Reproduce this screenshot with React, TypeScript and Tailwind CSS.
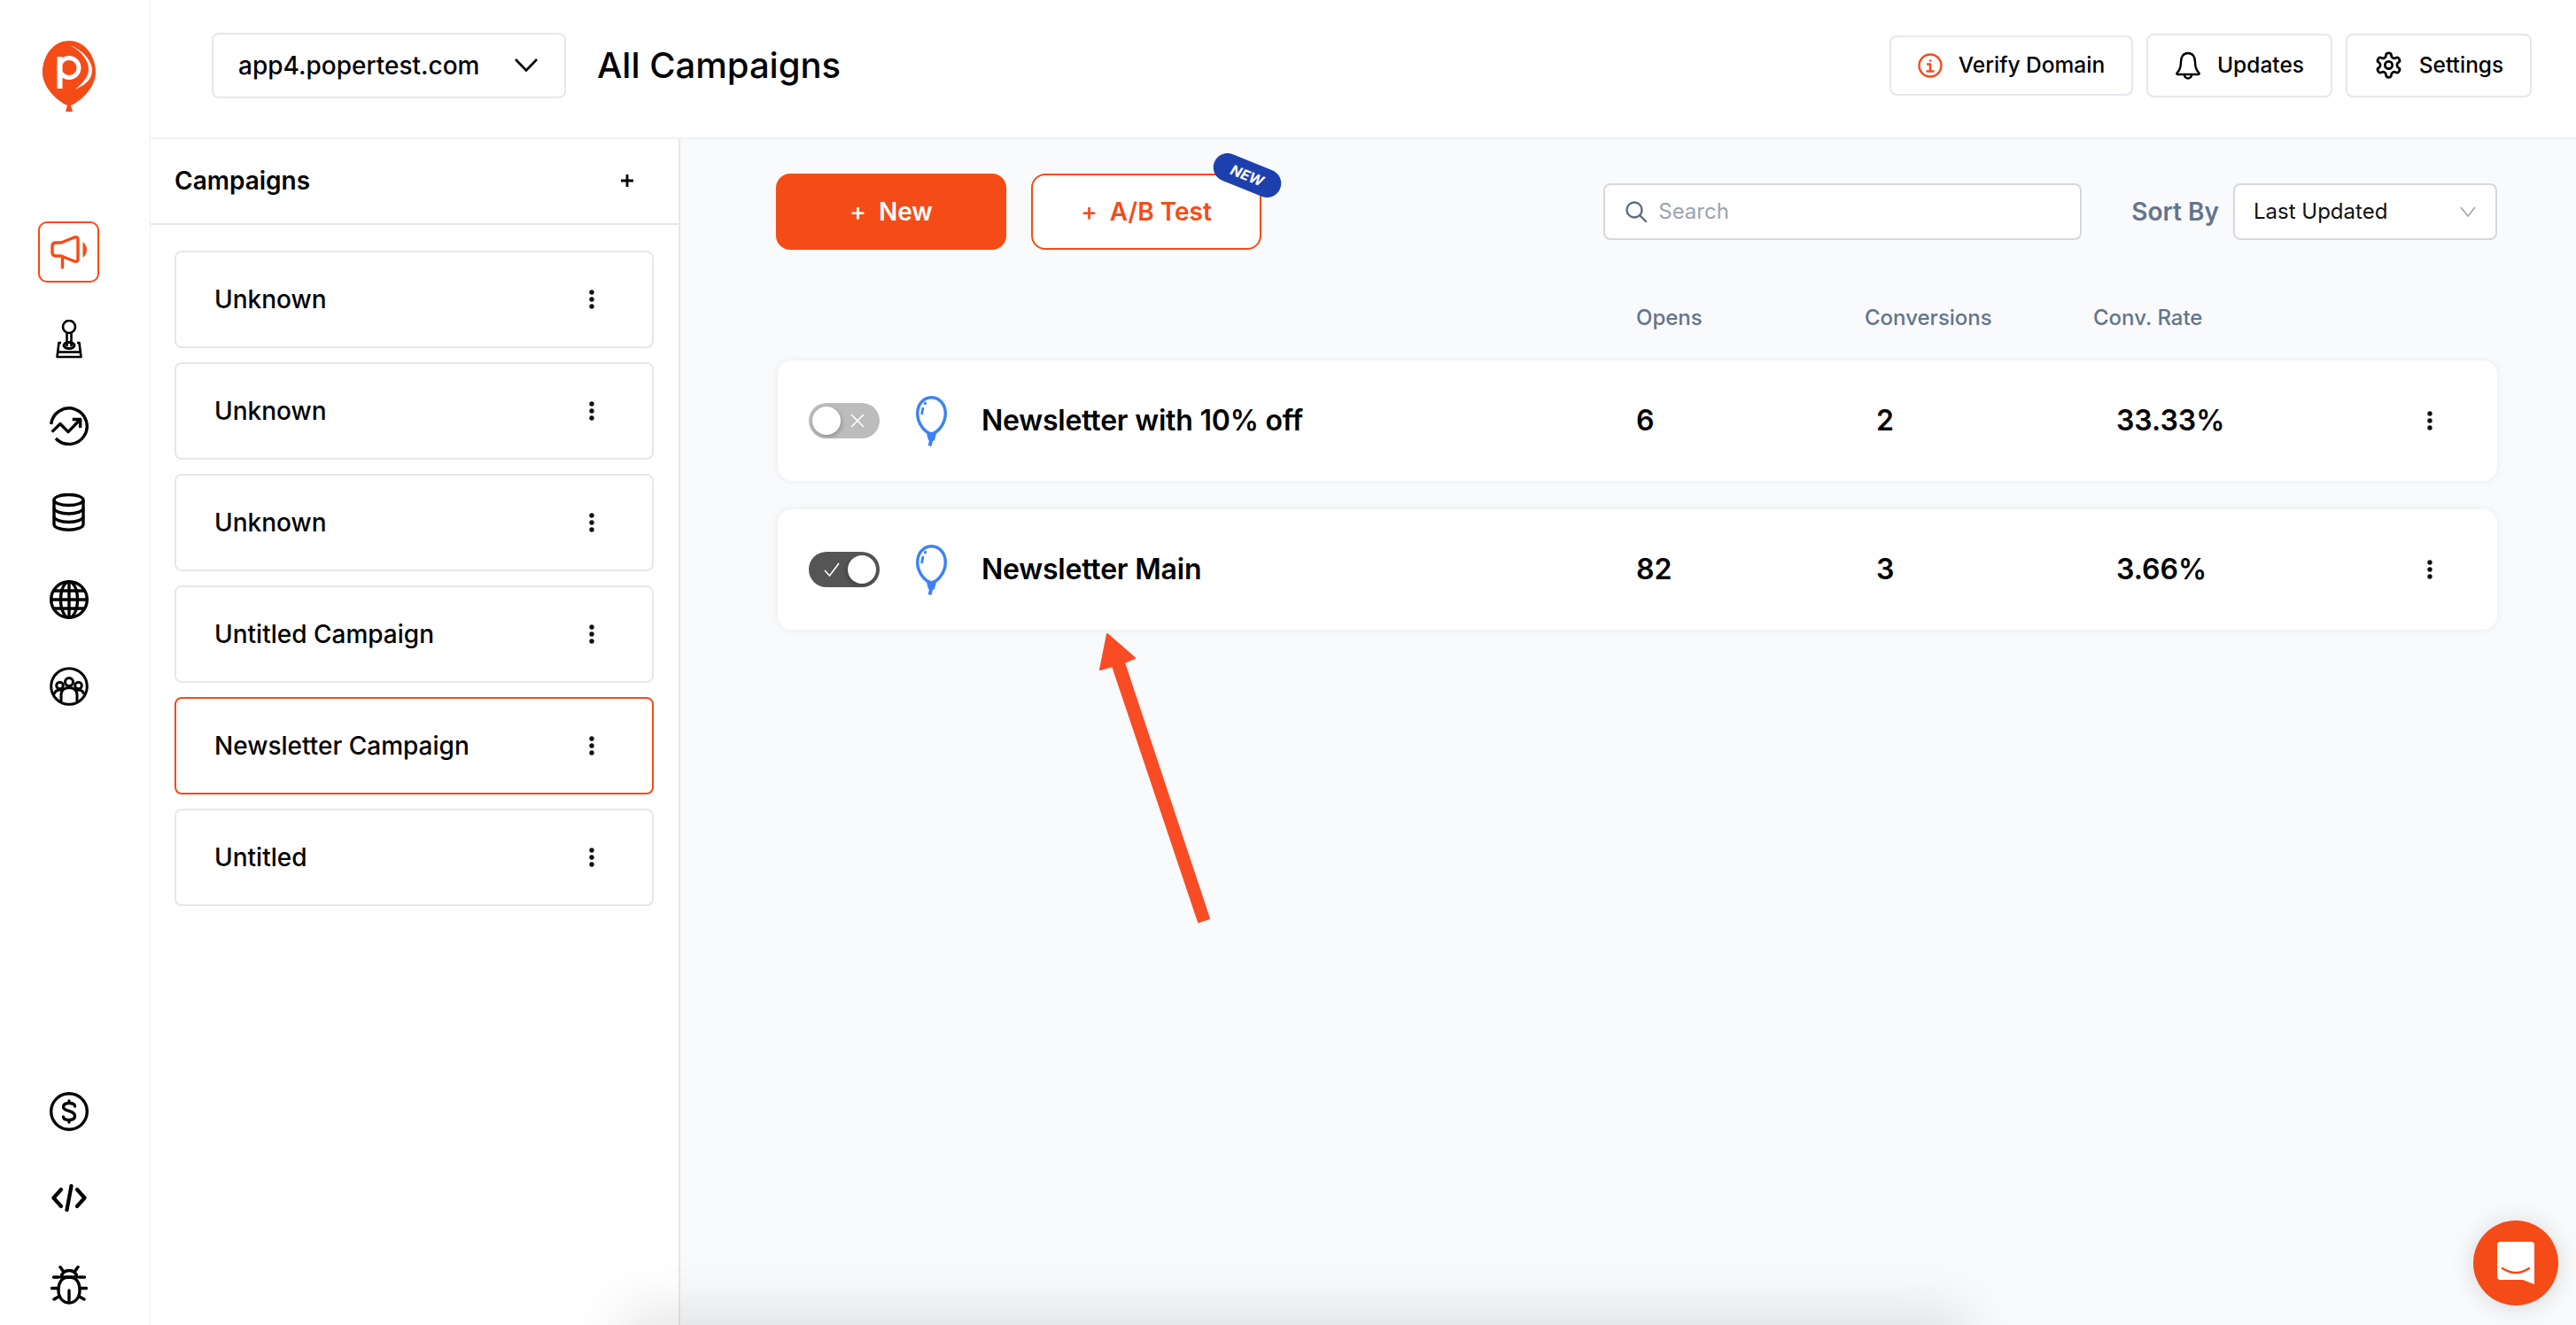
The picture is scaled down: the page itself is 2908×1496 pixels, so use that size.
import React from "react";

const ORANGE = "#f54b17";

function Logo() {
  return (
    <svg width="60" height="80" viewBox="0 0 60 80">
      <path d="M30 0C47 0 60 16 60 36C60 52 44 68 32 73L34 80L26 80L28 73C16 68 0 52 0 36C0 16 13 0 30 0Z" fill={ORANGE} />
      <circle cx="30" cy="30.5" r="11" fill="none" stroke="#fff" strokeWidth="5" />
      <rect x="16.500" y="18" width="6" height="36" fill="#fff" />
      <path d="M31 5C47 11 56 24 56 33C56 44 48 50 37 55C46 47 52 41 52 32C52 22 44 12 31 5Z" fill="#fff" />
    </svg>
  );
}

function Megaphone() {
  return (
    <svg width="41" height="39" viewBox="0 0 41 39" fill="none" stroke={ORANGE} strokeWidth="3.400" strokeLinejoin="round" strokeLinecap="round">
      <path d="M12 9L27 3Q31 2 31 5V28Q31 31 27 30L12 24H6Q2 24 2 20V13Q2 9 6 9Z" />
      <path d="M13.500 25V37" />
      <path d="M36.500 8Q41 12 41 17Q41 22 36.500 26Z" fill={ORANGE} stroke="none" />
    </svg>
  );
}

function Joystick() {
  return (
    <svg width="30" height="44" viewBox="0 0 30 44" fill="none" stroke="#000" strokeWidth="2.600" strokeLinejoin="round">
      <circle cx="15" cy="8" r="7" />
      <path d="M12.500 15V30M17.500 15V30" />
      <ellipse cx="15" cy="29" rx="6" ry="3.500" strokeWidth="3" />
      <path d="M6 26H3.500L1.500 42H28.500L26.500 26H24" />
      <path d="M2 36.500H28" />
    </svg>
  );
}

function Trend() {
  return (
    <svg width="44" height="44" viewBox="0 0 44 44" fill="none" stroke="#000" strokeWidth="3.400" strokeLinejoin="round">
      <path d="M1.700 20A20.300 20.300 0 1 1 7 36" />
      <path d="M2.700 28.600L12 19.500L21 28.600L34.700 14.500" />
      <path d="M25.700 14.500H34.700V24" />
    </svg>
  );
}

function Db() {
  return (
    <svg width="37" height="43" viewBox="0 0 37 43" fill="none" stroke="#000" strokeWidth="3.400">
      <ellipse cx="18.500" cy="7.500" rx="16.500" ry="6" />
      <path d="M2 7.500V35C2 38.500 9.500 41.300 18.500 41.300C27.500 41.300 35 38.500 35 35V7.500" />
      <path d="M2 16.500C2 20 9.500 23 18.500 23C27.500 23 35 20 35 16.500" />
      <path d="M2 26C2 29.500 9.500 32.500 18.500 32.500C27.500 32.500 35 29.500 35 26" />
    </svg>
  );
}

function Globe() {
  return (
    <svg width="44" height="44" viewBox="0 0 44 44" fill="none" stroke="#000" strokeWidth="3.400">
      <circle cx="22" cy="22" r="20.300" />
      <ellipse cx="22" cy="22" rx="9.500" ry="20.300" />
      <path d="M22 1.500V42.500M1.500 22H42.500M4.500 12H39.500M4.500 32H39.500" />
    </svg>
  );
}

function Audience() {
  return (
    <svg width="44" height="44" viewBox="0 0 44 44" fill="none" stroke="#000" strokeWidth="3">
      <circle cx="22" cy="22" r="20.300" />
      <circle cx="22" cy="17" r="4.500" />
      <circle cx="11.500" cy="21" r="3.800" />
      <circle cx="32.500" cy="21" r="3.800" />
      <path d="M13 41V32C13 26 17 23.500 22 23.500C27 23.500 31 26 31 32V41" />
      <path d="M5 31C6 27 8.500 25.500 13 26M39 31C38 27 35.500 25.500 31 26" />
    </svg>
  );
}

function Dollar() {
  return (
    <svg width="44" height="44" viewBox="0 0 44 44" fill="none" stroke="#000" strokeWidth="3.400" strokeLinecap="round">
      <circle cx="22" cy="22" r="20.300" />
      <path d="M28.500 16C28.500 13.500 26 12.500 22 12.500C18 12.500 15.500 14 15.500 17C15.500 22 28.500 20.500 28.500 27C28.500 30 26 31.500 22 31.500C18 31.500 15.500 30.500 15.500 28" />
      <path d="M22 10V12M22 32V34" />
    </svg>
  );
}

function Code() {
  return (
    <svg width="40" height="32" viewBox="0 0 40 32" fill="none" stroke="#000" strokeWidth="4.200" strokeLinecap="round" strokeLinejoin="round">
      <path d="M11 6L2.500 15.500L11 25" />
      <path d="M29 6L37.500 15.500L29 25" />
      <path d="M22.500 2L17.500 29" />
    </svg>
  );
}

function Bug() {
  return (
    <svg width="42" height="44" viewBox="0 0 42 44" fill="none" stroke="#000" strokeWidth="3.400" strokeLinecap="round" strokeLinejoin="round">
      <path d="M21 13C12 13 9 20 9 28C9 36 14 42 21 42C28 42 33 36 33 28C33 20 30 13 21 13Z" />
      <path d="M12 13H30C29 8 26 5.500 21 5.500C16 5.500 13 8 12 13Z" />
      <path d="M21 28V41" />
      <path d="M11 1.500L14.500 6.500M31 1.500L27.500 6.500M3.500 13H9.500M38.500 13H32.500M1.500 25.500H8M40.500 25.500H34M4 38L10 34.500M38 38L32 34.500" />
    </svg>
  );
}

function InfoIcon() {
  return (
    <svg width="28" height="28" viewBox="0 0 28 28" fill="none" stroke={ORANGE} strokeWidth="2.400" strokeLinecap="round">
      <circle cx="14" cy="14" r="12.500" />
      <circle cx="14" cy="8.500" r="1.300" fill={ORANGE} stroke="none" />
      <path d="M11 12.500H14V20M10.500 20.500H17.500" />
    </svg>
  );
}

function Bell() {
  return (
    <svg width="30" height="32" viewBox="0 0 30 32" fill="none" stroke="#000" strokeWidth="2.400" strokeLinejoin="round" strokeLinecap="round">
      <path d="M15 2C9 2 7 7 7 12C7 19 5 22 2.500 24.500C2 25.500 2.500 26 3.500 26H26.500C27.500 26 28 25.500 27.500 24.500C25 22 23 19 23 12C23 7 21 2 15 2Z" />
      <path d="M11 26.500C11 29 13 30.500 15 30.500C17 30.500 19 29 19 26.500" />
    </svg>
  );
}

function Gear() {
  return (
    <svg width="33" height="33" viewBox="0 0 24 24" fill="none" stroke="#000" strokeWidth="2" strokeLinecap="round" strokeLinejoin="round">
      <path d="M12.220 2h-.44a2 2 0 0 0-2 2v.18a2 2 0 0 1-1 1.730l-.43.250a2 2 0 0 1-2 0l-.150-.080a2 2 0 0 0-2.730.730l-.220.380a2 2 0 0 0 .730 2.730l.150.100a2 2 0 0 1 1 1.720v.510a2 2 0 0 1-1 1.740l-.150.090a2 2 0 0 0-.730 2.730l.220.380a2 2 0 0 0 2.730.730l.150-.080a2 2 0 0 1 2 0l.430.250a2 2 0 0 1 1 1.730V20a2 2 0 0 0 2 2h.440a2 2 0 0 0 2-2v-.18a2 2 0 0 1 1-1.730l.430-.250a2 2 0 0 1 2 0l.150.080a2 2 0 0 0 2.730-.730l.220-.390a2 2 0 0 0-.730-2.730l-.150-.080a2 2 0 0 1-1-1.740v-.500a2 2 0 0 1 1-1.740l.150-.090a2 2 0 0 0 .730-2.730l-.220-.380a2 2 0 0 0-2.730-.730l-.150.080a2 2 0 0 1-2 0l-.430-.250a2 2 0 0 1-1-1.730V4a2 2 0 0 0-2-2z" />
      <circle cx="12" cy="12" r="3" />
    </svg>
  );
}

function Dots() {
  return (
    <svg width="6" height="22" viewBox="0 0 6 22" fill="#111">
      <circle cx="3" cy="3" r="2.700" />
      <circle cx="3" cy="11" r="2.700" />
      <circle cx="3" cy="19" r="2.700" />
    </svg>
  );
}

function Balloon() {
  return (
    <svg width="35" height="57" viewBox="0 0 35 57" fill="none" stroke="#3b82f6" strokeWidth="3.400" strokeLinejoin="round">
      <path d="M17.500 1.700C8 1.700 1.700 10 1.700 20C1.700 30 9 41 17.500 43C26 41 33.300 30 33.300 20C33.300 10 27 1.700 17.500 1.700Z" />
      <path d="M14 43.500H21L19.500 49H15.500Z" fill="#3b82f6" />
      <path d="M17.500 49L15.500 56.500" strokeWidth="4" />
      <path d="M6.500 21L8 13" strokeWidth="2.800" />
      <circle cx="10.500" cy="8.500" r="1.700" fill="#3b82f6" stroke="none" />
    </svg>
  );
}

function Toggle({ on }: { on: boolean }) {
  return (
    <div className={`w-[80px] h-[40px] rounded-full flex items-center justify-between px-[4px] ${on ? "bg-[#555555]" : "bg-[#bcbcbc]"}`}>
      {on ? (
        <>
          <svg className="ml-[12px]" width="20" height="18" viewBox="0 0 20 18" fill="none" stroke="#fff" strokeWidth="1.600">
            <path d="M2 10L7.500 16L18 2" />
          </svg>
          <div className="w-[32px] h-[32px] rounded-full bg-white shadow-[-1px_2px_5px_rgba(0,0,0,0.25)]" />
        </>
      ) : (
        <>
          <div className="w-[32px] h-[32px] rounded-full bg-white shadow-[1px_2px_5px_rgba(0,0,0,0.25)]" />
          <svg className="mr-[13px]" width="16" height="16" viewBox="0 0 16 16" fill="none" stroke="#fff" strokeWidth="1.600">
            <path d="M1 1L15 15M15 1L1 15" />
          </svg>
        </>
      )}
    </div>
  );
}

function Row({ name, opens, conv, rate, on }: { name: string; opens: string; conv: string; rate: string; on: boolean }) {
  return (
    <div className="h-[136px] ml-[2px] bg-white rounded-[16px] shadow-[0_0_8px_rgba(15,23,42,0.07)] grid grid-cols-[969px_258px_258px_1fr] items-center text-[32px] font-semibold text-black">
      <div className="flex items-center pl-[35px]">
        <Toggle on={on} />
        <div className="ml-[41px] mr-[39px]">
          <Balloon />
        </div>
        <span className="tracking-[-0.2px]">{name}</span>
      </div>
      <span>{opens}</span>
      <span className="pl-[13px]">{conv}</span>
      <div className="flex items-center justify-between pl-[26px] pr-[73px]">
        <span>{rate}</span>
        <Dots />
      </div>
    </div>
  );
}

function TopButton({ icon, label, short }: { icon: React.ReactNode; label: string; short?: boolean }) {
  return (
    <div className={`${short ? "h-[68px] w-[275px] gap-[18px]" : "h-[72px] w-[210px] gap-[18px]"} rounded-[8px] border-2 border-[#e5e7eb] bg-white flex items-center justify-center text-[24.500px] font-medium text-black`}>
      {icon}
      <span>{label}</span>
    </div>
  );
}

const campaigns = ["Unknown", "Unknown", "Unknown", "Untitled Campaign", "Newsletter Campaign", "Untitled"];

export default function App() {
  return (
    <div className="relative flex h-[1496px] w-[2908px] overflow-hidden bg-white font-['Inter',sans-serif] text-black">
      <aside className="w-[170px] shrink-0 flex flex-col items-center border-r border-[#eeeff2] bg-white pt-[46px] pb-[11px] pr-[14px]">
        <Logo />
        <nav className="mt-[124px] flex flex-col items-center gap-[29px]">
          <div className="w-[69px] h-[69px] rounded-[10px] border-2 border-[#f54b17] flex items-center justify-center">
            <Megaphone />
          </div>
          {[<Joystick />, <Trend />, <Db />, <Globe />, <Audience />].map((icon, i) => (
            <div key={i} className="h-[69px] flex items-center justify-center">
              {icon}
            </div>
          ))}
        </nav>
        <div className="mt-auto flex flex-col items-center gap-[29px]">
          {[<Dollar />, <Code />, <Bug />].map((icon, i) => (
            <div key={i} className="h-[69px] flex items-center justify-center">
              {icon}
            </div>
          ))}
        </div>
      </aside>

      <div className="flex-1 flex flex-col min-w-0">
        <header className="h-[157px] shrink-0 flex items-center pl-[69px] pr-[50px] bg-white border-b-2 border-[#f1f2f4] pb-[8px]">
          <div className="w-[400px] h-[74px] rounded-[8px] border-2 border-[#e5e7eb] flex items-center justify-between pl-[28px] pr-[30px] text-[28px] font-medium">
            <span>app4.popertest.com</span>
            <svg width="26" height="15" viewBox="0 0 26 15" fill="none" stroke="#000" strokeWidth="2.600">
              <path d="M1 1L13 13.500L25 1" />
            </svg>
          </div>
          <h1 className="ml-[35px] text-[40px] font-medium">All Campaigns</h1>
          <div className="ml-auto flex items-center gap-[15px]">
            <TopButton icon={<InfoIcon />} label="Verify Domain" short />
            <TopButton icon={<Bell />} label="Updates" />
            <TopButton icon={<Gear />} label="Settings" />
          </div>
        </header>

        <div className="flex-1 flex min-h-0">
          <section className="w-[598px] shrink-0 bg-white border-r-2 border-[#e5e7eb]">
            <div className="h-[97px] pb-[2px] flex items-center justify-between pl-[27px] pr-[50px] border-b-2 border-[#e5e7eb]">
              <span className="text-[28px] font-semibold">Campaigns</span>
              <svg width="16" height="16" viewBox="0 0 16 16" stroke="#000" strokeWidth="2.800">
                <path d="M8 1V15M1 8H15" />
              </svg>
            </div>
            <div className="pt-[29px] pl-[27px] pr-[28px] flex flex-col gap-[16px]">
              {campaigns.map((c, i) => (
                <div
                  key={i}
                  className={`h-[110px] rounded-[8px] border-2 ${c === "Newsletter Campaign" ? "border-[#f54b17]" : "border-[#e5e7eb]"} flex items-center justify-between pl-[43px] pr-[65px] text-[28px] font-medium`}
                >
                  <span>{c}</span>
                  <Dots />
                </div>
              ))}
            </div>
          </section>

          <main className="relative flex-1 bg-[#f9fafc] pl-[108px] pr-[89px] pt-[39px]">
            <div className="flex items-center">
              <div className="w-[260px] h-[86px] rounded-[16px] bg-[#f54b17] flex items-center justify-center gap-[14px] text-[28px] font-semibold text-white">
                <span className="font-medium">+</span>
                <span>New</span>
              </div>
              <div className="relative ml-[28px] w-[260px] h-[86px] rounded-[16px] border-2 border-[#f54b17] bg-white flex items-center justify-center gap-[14px] text-[28px] font-semibold text-[#f54b17]">
                <span className="font-medium">+</span>
                <span>A/B Test</span>
                <div className="absolute right-[-26px] top-[-16px] w-[80px] h-[32px] rotate-[22deg] rounded-full bg-[#1e40af] flex items-center justify-center text-[16px] italic font-bold text-white">
                  NEW
                </div>
              </div>
              <div className="ml-auto w-[540px] h-[64px] rounded-[8px] border-2 border-[#d6d8dc] bg-white flex items-center pl-[22px] gap-[12px] text-[24px] text-[#9ca3af]">
                <svg width="26" height="26" viewBox="0 0 26 26" fill="none" stroke="#5f6b7c" strokeWidth="2.400" strokeLinecap="round">
                  <circle cx="11" cy="11" r="8.500" />
                  <path d="M17.500 17.500L24 24" />
                </svg>
                <span>Search</span>
              </div>
              <span className="ml-[56px] text-[28px] font-semibold text-[#64748b]">Sort By</span>
              <div className="ml-[16px] w-[298px] h-[64px] rounded-[8px] border-2 border-[#d6d8dc] bg-white flex items-center justify-between pl-[21px] pr-[22px] text-[24px] font-normal text-[#111]">
                <span>Last Updated</span>
                <svg width="18" height="12" viewBox="0 0 18 12" fill="none" stroke="#9ca3af" strokeWidth="1.600">
                  <path d="M1 1L9 11L17 1" />
                </svg>
              </div>
            </div>

            <div className="mt-[57px] mb-[32px] ml-[2px] h-[40px] grid grid-cols-[969px_258px_258px_1fr] items-center text-[24px] font-medium text-[#64748b]">
              <span className="col-start-2">Opens</span>
              <span className="col-start-3">Conversions</span>
              <span className="col-start-4">Conv. Rate</span>
            </div>

            <div className="flex flex-col gap-[32px] -mt-[4px]">
              <Row name="Newsletter with 10% off" opens="6" conv="2" rate="33.33%" on={false} />
              <Row name="Newsletter Main" opens="82" conv="3" rate="3.66%" on />
            </div>
          </main>
        </div>
      </div>

      {/* annotation arrow drawn over the page */}
      <svg className="absolute left-[1230px] top-[705px]" width="140" height="345" viewBox="0 0 140 345">
        <path d="M20 11L51 38L39 43L135 332L123 336L26 47L12 51Z" fill="#f94c25" stroke="#f94c25" strokeWidth="2" strokeLinejoin="round" />
      </svg>

      {/* soft shadow rising from below the window */}
      <div className="absolute left-[720px] top-[1496px] w-[1480px] h-[60px] bg-[#d8d9d8] shadow-[0_0_60px_18px_rgba(130,132,130,0.2)]" />

      {/* chat launcher */}
      <div className="absolute left-[2792px] top-[1378px] w-[96px] h-[96px] rounded-full bg-[#f54b17] shadow-[0_2px_30px_rgba(0,0,0,0.14)] flex items-center justify-center">
        <svg width="42" height="48" viewBox="0 0 42 48">
          <path d="M4 0H38Q42 0 42 4V48L29 43H4Q0 43 0 39V4Q0 0 4 0Z" fill="#fff" />
          <path d="M6 30Q21 40 36 30" fill="none" stroke="#f54b17" strokeWidth="2.400" strokeLinecap="round" />
        </svg>
      </div>
    </div>
  );
}
